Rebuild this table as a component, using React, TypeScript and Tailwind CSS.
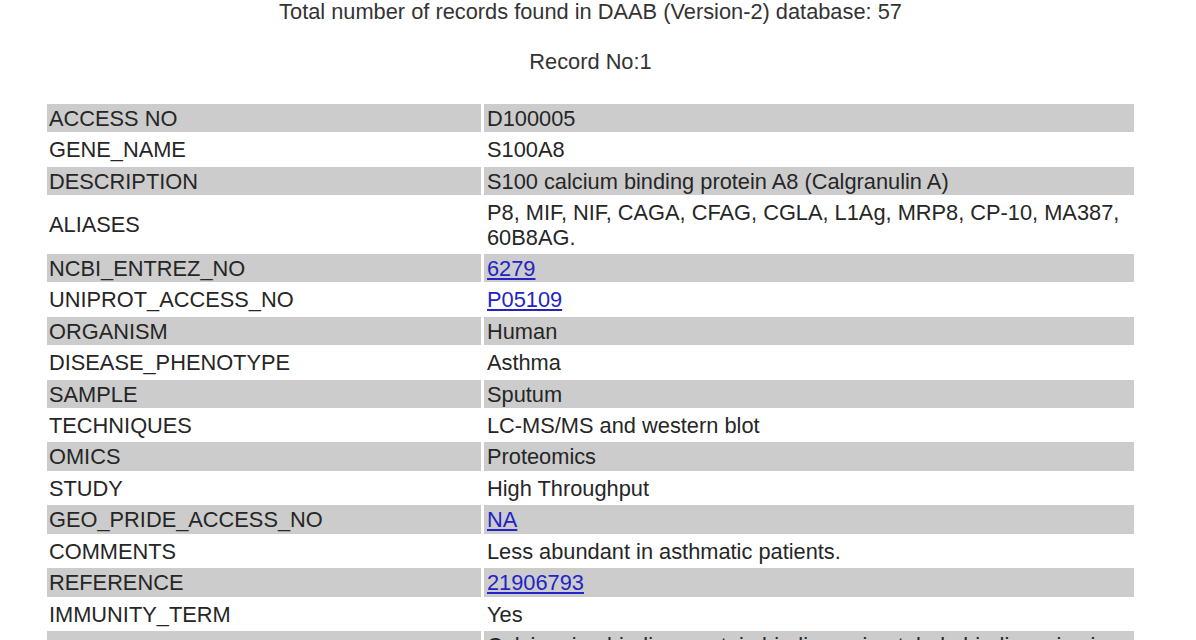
import React from "react";

type Row = { label: string; value: string; link?: boolean };

const rows: Row[] = [
  { label: "ACCESS NO", value: "D100005" },
  { label: "GENE_NAME", value: "S100A8" },
  { label: "DESCRIPTION", value: "S100 calcium binding protein A8 (Calgranulin A)" },
  { label: "ALIASES", value: "P8, MIF, NIF, CAGA, CFAG, CGLA, L1Ag, MRP8, CP-10, MA387, 60B8AG." },
  { label: "NCBI_ENTREZ_NO", value: "6279", link: true },
  { label: "UNIPROT_ACCESS_NO", value: "P05109", link: true },
  { label: "ORGANISM", value: "Human" },
  { label: "DISEASE_PHENOTYPE", value: "Asthma" },
  { label: "SAMPLE", value: "Sputum" },
  { label: "TECHNIQUES", value: "LC-MS/MS and western blot" },
  { label: "OMICS", value: "Proteomics" },
  { label: "STUDY", value: "High Throughput" },
  { label: "GEO_PRIDE_ACCESS_NO", value: "NA", link: true },
  { label: "COMMENTS", value: "Less abundant in asthmatic patients." },
  { label: "REFERENCE", value: "21906793", link: true },
  { label: "IMMUNITY_TERM", value: "Yes" },
  {
    label: "GENE_ONTOLOGY",
    value:
      "Calcium ion binding, protein binding, microtubule binding, zinc ion binding, antioxidant activity, Toll-like receptor 4 binding, arachidonic acid binding.",
  },
];

export default function App() {
  return (
    <div
      className="w-[1181px] bg-white text-[21.8px] text-[#262626] overflow-hidden h-[640px]"
      style={{ fontFamily: '"Liberation Sans", Arial, sans-serif' }}
    >
      <div className="text-center leading-[24px] text-[#333]">
        Total number of records found in DAAB (Version-2) database: 57
      </div>
      <div className="text-center leading-[24px] mt-[26px] text-[#333]">Record No:1</div>
      <table className="mx-auto mt-[27px] w-[1093px] border-separate border-spacing-[3px] table-fixed">
        <colgroup>
          <col className="w-[434px]" />
          <col />
        </colgroup>
        <tbody>
          {rows.map((r, i) => {
            const bg = i % 2 === 0 ? "bg-[#cccccc]" : "bg-white";
            return (
              <tr key={r.label}>
                <td className={`${bg} px-[2px] pt-[3px] pb-[1px] leading-[24.4px] align-middle text-left`}>
                  {r.label}
                </td>
                <td className={`${bg} pl-[3px] pr-[2px] pt-[3px] pb-[1px] leading-[24.4px] align-middle text-left`}>
                  {r.link ? (
                    <a href="#" className="text-[#2323c8] underline">
                      {r.value}
                    </a>
                  ) : (
                    r.value
                  )}
                </td>
              </tr>
            );
          })}
        </tbody>
      </table>
    </div>
  );
}
